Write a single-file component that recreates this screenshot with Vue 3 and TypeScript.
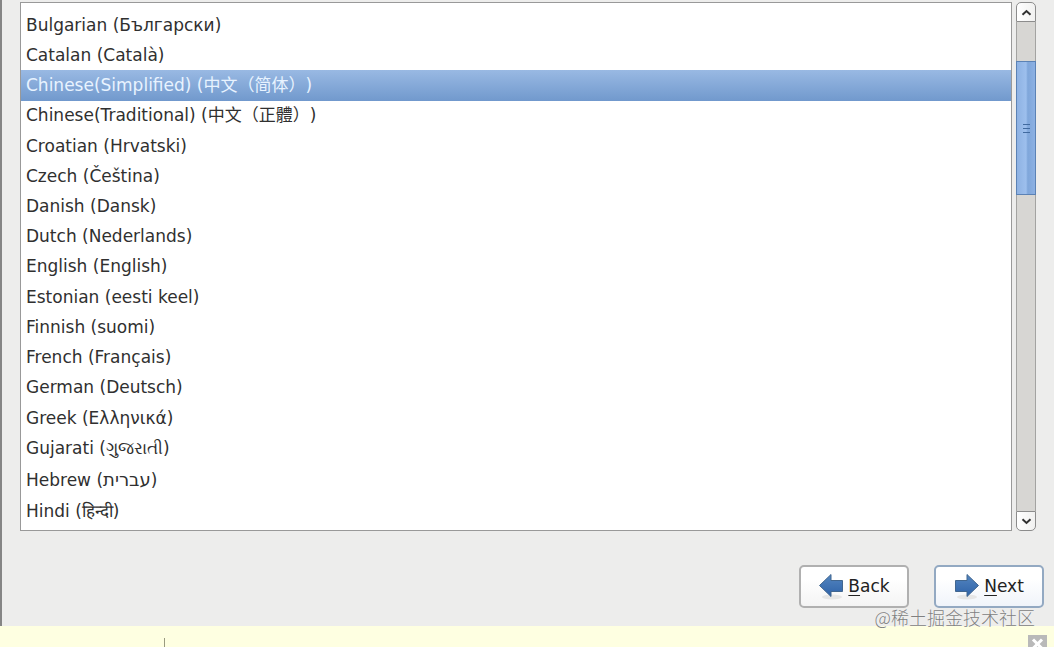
<script setup lang="ts">
import { ref } from 'vue'

interface Language {
  name: string
  native: string
  lang: string
  tall?: boolean
}

const languages: Language[] = [
  { name: 'Bulgarian', native: 'Български', lang: 'bg' },
  { name: 'Catalan', native: 'Català', lang: 'ca' },
  { name: 'Chinese(Simplified)', native: '中文（简体）', lang: 'zh-CN' },
  { name: 'Chinese(Traditional)', native: '中文（正體）', lang: 'zh-TW' },
  { name: 'Croatian', native: 'Hrvatski', lang: 'hr' },
  { name: 'Czech', native: 'Čeština', lang: 'cs' },
  { name: 'Danish', native: 'Dansk', lang: 'da' },
  { name: 'Dutch', native: 'Nederlands', lang: 'nl' },
  { name: 'English', native: 'English', lang: 'en' },
  { name: 'Estonian', native: 'eesti keel', lang: 'et' },
  { name: 'Finnish', native: 'suomi', lang: 'fi' },
  { name: 'French', native: 'Français', lang: 'fr' },
  { name: 'German', native: 'Deutsch', lang: 'de' },
  { name: 'Greek', native: 'Ελληνικά', lang: 'el' },
  { name: 'Gujarati', native: 'ગુજરાતી', lang: 'gu', tall: true },
  { name: 'Hebrew', native: 'עברית', lang: 'he', tall: true },
  { name: 'Hindi', native: 'हिन्दी', lang: 'hi', tall: true },
]

const selected = ref('zh-CN')
</script>

<template>
  <div class="page">
    <main class="installer">
      <div class="chooser">
        <ul class="languages" role="listbox" aria-label="Language">
          <li
            v-for="item in languages"
            :key="item.lang"
            class="language"
            :class="{ selected: item.lang === selected, tall: item.tall }"
            role="option"
            tabindex="0"
            :aria-selected="item.lang === selected"
            @click="selected = item.lang"
            @keydown.enter="selected = item.lang"
          >
            <span>{{ item.name }} (<span class="native" :class="item.lang" :lang="item.lang">{{ item.native }}</span>)</span>
          </li>
        </ul>
        <div class="scrollbar">
          <button class="step up" type="button" aria-label="Scroll up">
            <svg width="11" height="7" viewBox="0 0 11 7"><path d="M1.5 5.7 5.5 2l4 3.7" /></svg>
          </button>
          <div class="track">
            <div class="before"></div>
            <div class="thumb"><i></i><i></i><i></i></div>
            <div class="after"></div>
          </div>
          <button class="step down" type="button" aria-label="Scroll down">
            <svg width="11" height="7" viewBox="0 0 11 7"><path d="M1.5 1.3 5.5 5l4-3.7" /></svg>
          </button>
        </div>
      </div>
      <footer class="actions">
        <button class="action" type="button">
          <svg class="arrow" width="26" height="28" viewBox="0 0 26 28">
            <defs>
              <linearGradient id="back-fill" x1="0" y1="0" x2="0" y2="1">
                <stop offset="0" stop-color="#5486c0" />
                <stop offset="1" stop-color="#2e62a8" />
              </linearGradient>
            </defs>
            <ellipse cx="14" cy="25" rx="10" ry="2.5" fill="#e6e6e6" />
            <path d="M1.5 13.5 13 2.5v6h11.5v11H13v5z" fill="url(#back-fill)" stroke="#41668f" />
          </svg>
          <span><u>B</u>ack</span>
        </button>
        <button class="action default" type="button">
          <svg class="arrow" width="26" height="28" viewBox="0 0 26 28">
            <defs>
              <linearGradient id="next-fill" x1="0" y1="0" x2="0" y2="1">
                <stop offset="0" stop-color="#5486c0" />
                <stop offset="1" stop-color="#2e62a8" />
              </linearGradient>
            </defs>
            <ellipse cx="13" cy="25" rx="10" ry="2.5" fill="#e6e6e6" />
            <path d="M24.5 13.5 13 2.5v6H1.5v11H13v5z" fill="url(#next-fill)" stroke="#41668f" />
          </svg>
          <span><u>N</u>ext</span>
        </button>
      </footer>
    </main>
    <div class="notice">
      <span class="divider"></span>
      <button class="close" type="button" aria-label="Close">
        <svg width="19" height="19" viewBox="0 0 19 19"><path d="m5 4.5 9 9m0-9-9 9" /></svg>
      </button>
    </div>
    <div class="watermark">@稀土掘金技术社区</div>
  </div>
</template>

<style>
body {
  margin: 0;
}
</style>

<style scoped>
.page {
  position: relative;
  box-sizing: border-box;
  min-height: 100vh;
  display: flex;
  flex-direction: column;
  overflow: hidden;
  background: #feffe1;
  color: #303030;
  font-family: "DejaVu Sans", "Noto Sans CJK SC", sans-serif;
  font-size: 17px;
}

.installer {
  flex: 1;
  display: flex;
  flex-direction: column;
  box-sizing: border-box;
  padding: 2px 10px 18px 18px;
  border-left: 2px solid #858585;
  background: #ededec;
}

.chooser {
  flex: 1;
  display: flex;
  gap: 4px;
  margin-right: 8px;
}

.languages {
  flex: 1;
  display: flex;
  flex-direction: column;
  box-sizing: border-box;
  margin: 0;
  padding: 7px 0 3px;
  border: 1px solid #999;
  background: #fff;
  list-style: none;
}

.language {
  flex: 1 0 30px;
  display: flex;
  align-items: center;
  box-sizing: border-box;
  padding: 0 5px 1px;
  line-height: 24px;
  white-space: nowrap;
  cursor: default;
  outline: none;
}

.language.tall {
  flex-basis: 31px;
}

.language.selected {
  background: linear-gradient(#99b9e3, #7199cd);
  color: #e8f3ff;
}

.native {
  line-height: 1;
}

.native.zh-CN,
.native.zh-TW {
  font-family: "Noto Sans CJK SC", sans-serif;
  text-spacing-trim: space-all;
}

.native.he {
  font-size: 18px;
}

.scrollbar {
  width: 20px;
  display: flex;
  flex-direction: column;
}

.step {
  height: 20px;
  display: flex;
  align-items: center;
  justify-content: center;
  box-sizing: border-box;
  margin: 0;
  padding: 0;
  border: 1px solid #8c8c8c;
  background: linear-gradient(90deg, #fff, #f1f1f0);
}

.step.up {
  border-radius: 5px 5px 0 0;
}

.step.down {
  border-radius: 0 0 5px 5px;
}

.step path {
  fill: none;
  stroke: #303030;
  stroke-width: 2;
}

.track {
  flex: 1;
  display: flex;
  flex-direction: column;
}

.before,
.after {
  box-sizing: border-box;
  border: solid #a3a3a1;
  border-width: 0 1px;
  background: #d7d6d3;
}

.before {
  flex: 39;
}

.after {
  flex: 317;
}

.thumb {
  flex: 133;
  display: flex;
  flex-direction: column;
  align-items: center;
  justify-content: center;
  gap: 3px;
  box-sizing: border-box;
  border: 1px solid #5b82b5;
  background: linear-gradient(90deg, #8eb2e3, #9dbfed 50%, #7fa6da 60%, #8db1e3);
}

.thumb i {
  width: 7px;
  height: 1px;
  background: #416a9f;
}

.actions {
  display: flex;
  justify-content: flex-end;
  gap: 25px;
  margin-top: 34px;
}

.action {
  width: 110px;
  height: 43px;
  display: flex;
  align-items: center;
  justify-content: center;
  gap: 4px;
  box-sizing: border-box;
  margin: 0;
  padding: 0 0 2px;
  border: 2px solid #b0b0b0;
  border-radius: 5px;
  background: linear-gradient(#fff 30%, #f4f4f4);
  color: #222;
  font: inherit;
}

.action.default {
  border-color: #93a9c2;
  background: linear-gradient(#fff 30%, #f0f4fa);
}

.action u {
  text-underline-offset: 3px;
  text-decoration-thickness: 1px;
}

.notice {
  height: 21px;
  display: flex;
  justify-content: space-between;
  box-sizing: border-box;
  padding: 9px 7px 0 164px;
  overflow: hidden;
}

.divider {
  width: 1px;
  margin-top: 3px;
  background: #999a80;
}

.close {
  width: 19px;
  height: 19px;
  margin: 0;
  padding: 0;
  border: 0;
  background: #b9b9b9;
}

.close path {
  fill: none;
  stroke: #fff;
  stroke-width: 3;
}

.watermark {
  position: absolute;
  right: 19px;
  bottom: 18px;
  color: #808080;
  font: 300 18px/24px "Noto Sans CJK SC", sans-serif;
  text-shadow: 0 0 1px #fff;
  pointer-events: none;
}
</style>
